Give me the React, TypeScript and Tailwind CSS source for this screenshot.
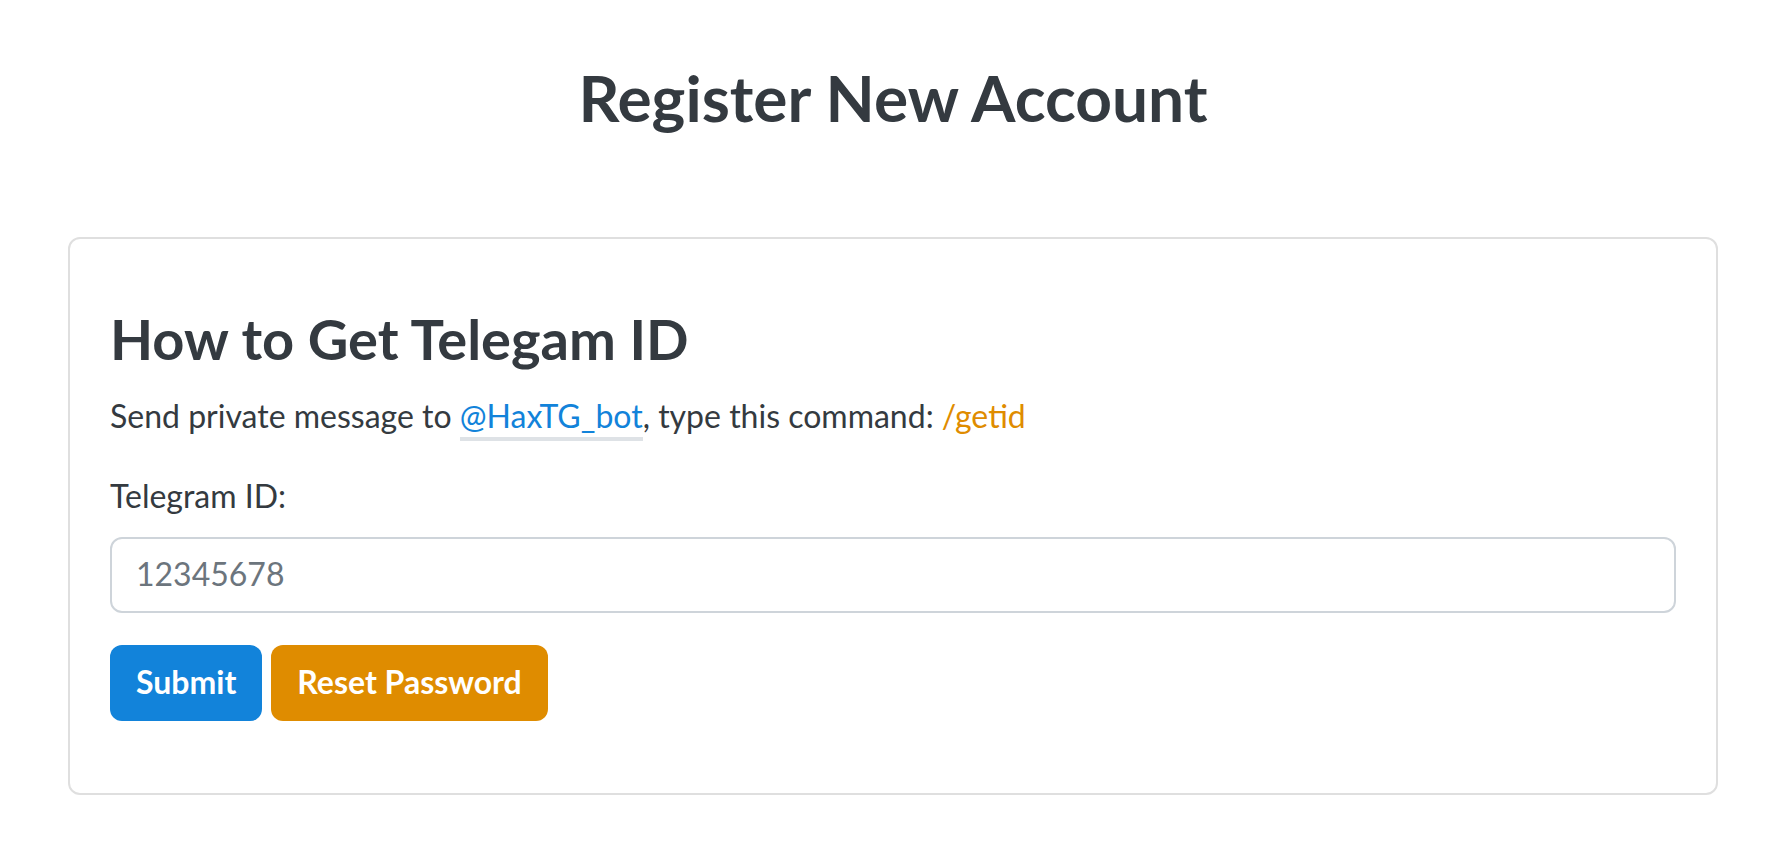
export default function App() {
  return (
    <main className="min-h-screen bg-white pt-[60px] pr-[60px] pb-[62px] pl-[68px] font-['Lato',sans-serif] text-[32px] leading-[48px] text-[#343a40]">
      <h1 className="text-center text-[64px] leading-[76px] font-bold">Register New Account</h1>
      <section className="mt-[101px] rounded-xl border-2 border-[#dfdfdf] px-10 pt-[66px] pb-[72px]">
        <h2 className="text-[56px] leading-[68px] font-bold">How to Get Telegam ID</h2>
        <p className="mt-[19px]">
          Send private message to{' '}
          <a href="#bot" className="border-b-4 border-[#dee2e6] pb-0.5 text-[#1283da]">@HaxTG_bot</a>, type this command:{' '}
          <span className="text-[#df8c00]">/getid</span>
        </p>
        <form className="mt-8" onSubmit={(e) => e.preventDefault()}>
          <label htmlFor="telegram-id" className="block">Telegram ID:</label>
          <input
            id="telegram-id"
            placeholder="12345678"
            className="mt-[17px] block h-[76px] w-full rounded-xl border-2 border-[#ced4da] px-6 pb-1 placeholder:text-[#6c757d]"
          />
          <div className="mt-8 flex gap-[9px] font-bold text-white">
            <button type="submit" className="h-[76px] rounded-xl bg-[#1283da] px-[26px] pb-0.5">Submit</button>
            <button type="button" className="h-[76px] rounded-xl bg-[#df8c00] px-[26px] pb-0.5">Reset Password</button>
          </div>
        </form>
      </section>
    </main>
  );
}
